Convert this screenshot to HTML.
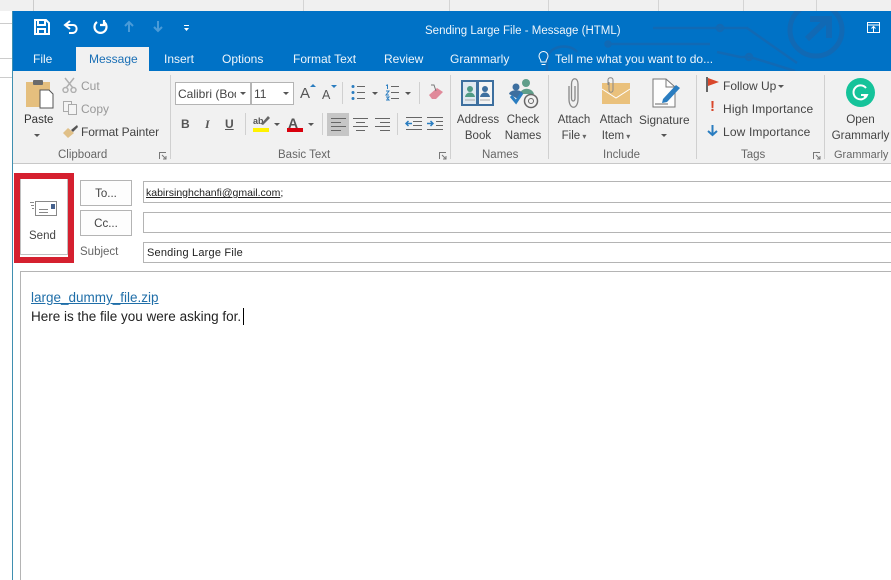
<!DOCTYPE html>
<html><head><meta charset="utf-8"><style>
html,body{margin:0;padding:0;width:891px;height:580px;overflow:hidden;background:#fff}
body{position:relative;font-family:"Liberation Sans",sans-serif;font-size:12px;color:#444}
div,span.t,svg{position:absolute}
.t{position:absolute;white-space:nowrap;line-height:14px}
.c{text-align:center}
.w{color:#eef5fb}
.g{color:#666}
.d{color:#a0a0a0}
.sep{width:1px;background:#d0d0d0}
.box{background:#fff;border:1px solid #b4b4b4;box-sizing:border-box}
.arr{width:0;height:0;border-left:3px solid transparent;border-right:3px solid transparent;border-top:3px solid #555}
</style></head><body>
<!-- background app -->
<div style="left:0;top:0;width:891px;height:11px;background:#f0f0f0"></div>
<div style="left:33px;top:0;width:1px;height:11px;background:#ccc"></div>
<div style="left:303px;top:0;width:1px;height:11px;background:#d4d4d4"></div>
<div style="left:449px;top:0;width:1px;height:11px;background:#d4d4d4"></div>
<div style="left:548px;top:0;width:1px;height:11px;background:#d4d4d4"></div>
<div style="left:658px;top:0;width:1px;height:11px;background:#d4d4d4"></div>
<div style="left:743px;top:0;width:1px;height:11px;background:#d4d4d4"></div>
<div style="left:816px;top:0;width:1px;height:11px;background:#d4d4d4"></div>
<div style="left:0;top:23px;width:12px;height:1px;background:#ccc"></div>
<div style="left:0;top:58px;width:12px;height:1px;background:#ccc"></div>
<div style="left:0;top:77px;width:12px;height:1px;background:#ccc"></div>
<!-- window -->
<div style="left:12px;top:11px;width:879px;height:569px;background:#fff;border-left:1px solid #3f8fb0;box-sizing:border-box"></div>
<div style="left:13px;top:11px;width:878px;height:60px;background:#0072c6"></div>
<!-- decoration -->
<svg style="left:400px;top:11px" width="491" height="60" fill="none" stroke="#1169b4" stroke-width="2.500">
<circle cx="416" cy="19" r="26" stroke-width="5"/>
<path d="M407 28L428 8M410 8H429V27" stroke-width="6"/>
<path d="M253 17H347L397 52"/>
<circle cx="320" cy="17" r="3"/>
<path d="M207 33H310"/>
<circle cx="208" cy="33" r="2.500"/>
<path d="M317 41L340 46H350L395 60M350 46" />
<circle cx="349" cy="46" r="3"/>
<path d="M147 47C150 34 170 32 177 41M147 47V60"/>
</svg>
<!-- QAT -->
<svg style="left:34px;top:19px" width="16" height="16" fill="none" stroke="#fff" stroke-width="2"><path d="M1 1H12L15 4V15H1Z"/><path d="M4 2V6H11V2M4 15V10H11V15"/></svg>
<svg style="left:63px;top:19px" width="16" height="16" fill="none" stroke="#fff" stroke-width="2"><path d="M7 2L2 6L7 10M2 6H10C15 6 15 14 9 14H6"/></svg>
<svg style="left:92px;top:19px" width="16" height="16" fill="none" stroke="#fff" stroke-width="2.200"><path d="M5 3A6 6 0 1 0 12 3M12 1V6H8"/></svg>
<svg style="left:123px;top:20px" width="12" height="13" fill="none" stroke="#4a9bd8" stroke-width="2"><path d="M6 12V2M2 6L6 2L10 6"/></svg>
<svg style="left:152px;top:20px" width="12" height="13" fill="none" stroke="#4a9bd8" stroke-width="2"><path d="M6 1V11M2 7L6 11L10 7"/></svg>
<svg style="left:183px;top:25px" width="8" height="8" fill="#fff"><rect x="1" y="0" width="5" height="1"/><path d="M1 3H6L3.500 6Z"/></svg>
<span class="t w" style="left:425px;top:24px;font-size:11.500px">Sending Large File - Message (HTML)</span>
<svg style="left:867px;top:22px" width="13" height="11" fill="none" stroke="#fff"><rect x=".5" y=".5" width="12" height="10"/><path d="M.5 3H12.500M6.500 10V5M4.500 6.500L6.500 4.500L8.500 6.500"/></svg>
<!-- tabs -->
<div style="left:76px;top:47px;width:73px;height:24px;background:#f1f1f1"></div>
<span class="t w" style="left:33px;top:52px">File</span>
<span class="t" style="left:89px;top:52px;color:#1a6fb5">Message</span>
<span class="t w" style="left:164px;top:52px">Insert</span>
<span class="t w" style="left:222px;top:52px">Options</span>
<span class="t w" style="left:293px;top:52px">Format Text</span>
<span class="t w" style="left:384px;top:52px">Review</span>
<span class="t w" style="left:450px;top:52px">Grammarly</span>
<svg style="left:537px;top:51px" width="13" height="16" fill="none" stroke="#fff"><path d="M4 11C4 8 2 8 2 5A4.500 4.500 0 0 1 11 5C11 8 9 8 9 11ZM4.500 13.500H8.500"/></svg>
<span class="t w" style="left:555px;top:52px">Tell me what you want to do...</span>
<!-- ribbon -->
<div style="left:13px;top:71px;width:878px;height:92px;background:#f1f1f1;border-bottom:1px solid #c8c8c8"></div>
<div class="sep" style="left:170px;top:75px;height:84px"></div>
<div class="sep" style="left:450px;top:75px;height:84px"></div>
<div class="sep" style="left:548px;top:75px;height:84px"></div>
<div class="sep" style="left:696px;top:75px;height:84px"></div>
<div class="sep" style="left:824px;top:75px;height:84px"></div>
<!-- clipboard -->
<svg style="left:25px;top:78px" width="30" height="32"><rect x="1" y="4" width="24" height="25" fill="#e5bf7e"/><rect x="8" y="2" width="10" height="5" rx="1" fill="#6b6b6b"/><path d="M15 12H24L28 16V30H15Z" fill="#fff" stroke="#555"/></svg>
<span class="t" style="left:24px;top:113px;color:#333;font-size:11.500px">Paste</span>
<div class="arr" style="left:34px;top:134px"></div>
<svg style="left:62px;top:77px" width="16" height="16" fill="none" stroke="#b0b0b0" stroke-width="1.500"><path d="M3 1L11 11M12 1L4 11"/><circle cx="3.500" cy="13" r="2.500"/><circle cx="11.500" cy="13" r="2.500"/></svg>
<span class="t d" style="left:81px;top:79px;color:#999">Cut</span>
<svg style="left:62px;top:100px" width="16" height="16" fill="#f4f4f4" stroke="#aaa"><rect x="1.500" y="1.500" width="8" height="10"/><rect x="6.500" y="4.500" width="8" height="10"/></svg>
<span class="t d" style="left:81px;top:102px;color:#999">Copy</span>
<svg style="left:62px;top:124px" width="17" height="15"><path d="M1 9L6 4L12 9L6 14Z" fill="#e0c088"/><path d="M9 6L15 1L16 3L11 8Z" fill="#555"/></svg>
<span class="t" style="left:81px;top:125px;letter-spacing:-.1px">Format Painter</span>
<span class="t g" style="left:58px;top:148px;font-size:11.500px">Clipboard</span>
<svg style="left:159px;top:152px" width="8" height="8" fill="none" stroke="#777"><path d="M.5 7V.5H7M3 3L7 7M7 4V7H4"/></svg>
<!-- font -->
<div class="box" style="left:175px;top:82px;width:76px;height:23px"></div>
<div class="box" style="left:251px;top:82px;width:43px;height:23px"></div>
<span class="t" style="left:178px;top:87px;width:58px;overflow:hidden">Calibri (Body)</span>
<div class="arr" style="left:240px;top:92px"></div>
<span class="t" style="left:254px;top:87px">11</span>
<div class="arr" style="left:283px;top:92px"></div>
<span class="t" style="left:300px;top:87px;font-size:15px;color:#555">A</span>
<span class="t" style="left:322px;top:88px;font-size:12.500px;color:#555">A</span>
<div style="left:310px;top:84px;width:0;height:0;border:3px solid transparent;border-bottom:3px solid #2a7dc0;border-top:0"></div>
<div style="left:331px;top:85px;width:0;height:0;border:3px solid transparent;border-top:3px solid #2a7dc0;border-bottom:0"></div>
<div class="sep" style="left:342px;top:82px;height:22px"></div>
<svg style="left:350px;top:84px" width="16" height="18" fill="none" stroke="#666"><path d="M7 2.500H15M7 8.500H15M7 14.500H15"/><g fill="#2a7dc0" stroke="none"><circle cx="3" cy="2.500" r="1.500"/><circle cx="3" cy="8.500" r="1.500"/><circle cx="3" cy="14.500" r="1.500"/></g></svg>
<div class="arr" style="left:372px;top:92px"></div>
<svg style="left:384px;top:84px" width="16" height="18" fill="none" stroke="#666"><path d="M7 2.500H15M7 8.500H15M7 14.500H15"/><g stroke="#2a7dc0"><path d="M2 1.500L3.500 1V5M2 7H5L2 11H5M2 13H5L3.500 14.500L5 16H2"/></g></svg>
<div class="arr" style="left:405px;top:92px"></div>
<div class="sep" style="left:419px;top:82px;height:22px"></div>
<svg style="left:428px;top:84px" width="16" height="17"><path d="M1 11L9 4L15 8L8 15H4Z" fill="#e08a9a"/><path d="M3 1H6L8 7" fill="none" stroke="#777"/></svg>
<span class="t" style="left:181px;top:117px;font-weight:bold;color:#555">B</span>
<span class="t" style="left:205px;top:117px;font-style:italic;font-weight:bold;color:#555;font-family:'Liberation Serif',serif">I</span>
<span class="t" style="left:225px;top:117px;font-weight:bold;color:#555;text-decoration:underline">U</span>
<div class="sep" style="left:245px;top:113px;height:22px"></div>
<span class="t" style="left:253px;top:114px;font-size:9px;font-weight:bold;color:#555">ab</span>
<svg style="left:260px;top:115px" width="10" height="10"><path d="M1 9L8 1L10 3L3 10Z" fill="#666"/></svg>
<div style="left:253px;top:128px;width:16px;height:4px;background:#fff200"></div>
<div class="arr" style="left:274px;top:123px"></div>
<span class="t" style="left:288px;top:116px;font-size:14px;font-weight:bold;color:#555">A</span>
<div style="left:287px;top:128px;width:16px;height:4px;background:#d9000d"></div>
<div class="arr" style="left:308px;top:123px"></div>
<div class="sep" style="left:322px;top:113px;height:22px"></div>
<div style="left:327px;top:113px;width:22px;height:23px;background:#c6c6c6"></div>
<svg style="left:331px;top:118px" width="15" height="13" stroke="#666" fill="none"><path d="M0 .5H15M0 4.500H10M0 8.500H15M0 12.500H10"/></svg>
<svg style="left:353px;top:118px" width="15" height="13" stroke="#666" fill="none"><path d="M0 .5H15M3 4.500H12M0 8.500H15M3 12.500H12"/></svg>
<svg style="left:375px;top:118px" width="15" height="13" stroke="#666" fill="none"><path d="M0 .5H15M5 4.500H15M0 8.500H15M5 12.500H15"/></svg>
<div class="sep" style="left:397px;top:113px;height:22px"></div>
<svg style="left:404px;top:117px" width="18" height="15" fill="none" stroke="#666"><path d="M2 .5H18M9 4.500H18M9 8.500H18M2 12.500H18"/><path d="M8 6.500H2M4.500 4L2 6.500L4.500 9" stroke="#2a7dc0" stroke-width="1.500"/></svg>
<svg style="left:427px;top:117px" width="18" height="15" fill="none" stroke="#666"><path d="M0 .5H16M9 4.500H16M9 8.500H16M0 12.500H16"/><path d="M0 6.500H6M3.500 4L6 6.500L3.500 9" stroke="#2a7dc0" stroke-width="1.500"/></svg>
<span class="t g" style="left:278px;top:148px;font-size:11.500px">Basic Text</span>
<svg style="left:439px;top:152px" width="8" height="8" fill="none" stroke="#777"><path d="M.5 7V.5H7M3 3L7 7M7 4V7H4"/></svg>
<!-- names -->
<svg style="left:461px;top:79px" width="34" height="28"><path d="M1 2H16V26H1Z" fill="#dfe8f0" stroke="#3d6f9f" stroke-width="2"/><path d="M17 2H32V26H17Z" fill="#f4f4f4" stroke="#3d6f9f" stroke-width="2"/><circle cx="9" cy="10" r="3" fill="#4f9a85"/><path d="M4 18C5 12 13 12 14 18Z" fill="#4f9a85"/><circle cx="24" cy="10" r="3" fill="#3d6f9f"/><path d="M19 18C20 12 28 12 29 18Z" fill="#3d6f9f"/><path d="M4 21H14M19 21H29" stroke="#aaa"/></svg>
<div class="t c" style="left:452px;top:112px;width:52px;line-height:16px;color:#444;font-size:11.500px">Address<br>Book</div>
<svg style="left:508px;top:78px" width="32" height="32" fill="none"><circle cx="8" cy="9" r="3.500" fill="#3d6f9f"/><circle cx="18" cy="5" r="4" fill="#5f9e8a"/><path d="M12 16C13 9 24 9 26 16Z" fill="#5f9e8a"/><path d="M1 16C2 11 14 11 15 16L10 21Z" fill="#3d6f9f"/><path d="M3 18L8 24L14 15" stroke="#2a7dc0" stroke-width="3"/><circle cx="23" cy="23" r="6.500" stroke="#666" stroke-width="1.500"/><circle cx="23" cy="23" r="2.500" stroke="#666"/></svg>
<div class="t c" style="left:500px;top:112px;width:46px;line-height:16px;font-size:11.500px">Check<br>Names</div>
<span class="t g" style="left:482px;top:148px;font-size:11.500px">Names</span>
<!-- include -->
<svg style="left:566px;top:78px" width="14" height="30" fill="none" stroke="#888" stroke-width="1.300"><path d="M3 8V21C3 32 12 32 12 21V6C12-1 5.500-1 5.500 6V20C5.500 24 9 24 9 20V8"/></svg>
<div class="t c" style="left:552px;top:112px;width:44px;line-height:16px;font-size:11.500px">Attach<br>File<span style="font-size:8px;color:#666"> ▾</span></div>
<svg style="left:601px;top:77px" width="30" height="30"><rect x="1" y="6" width="28" height="21" fill="#eac17c"/><path d="M1 12L15 21L29 12" fill="none" stroke="#fff"/><path d="M7 8V3C7 0 12 0 12 3V13C12 16 8 16 8 13V5" fill="none" stroke="#888"/></svg>
<div class="t c" style="left:594px;top:112px;width:44px;line-height:16px;font-size:11.500px">Attach<br>Item<span style="font-size:8px;color:#666"> ▾</span></div>
<svg style="left:652px;top:78px" width="30" height="30" fill="none"><path d="M1 1H14L23 9V29H1Z" fill="#fdfdfd" stroke="#777"/><path d="M14 1V9H23" stroke="#777"/><path d="M11 21L24 7L28 10L15 24L10 25Z" fill="#2a7dc0"/><path d="M3 26H16" stroke="#666"/></svg>
<span class="t" style="left:639px;top:113px;font-size:11.800px">Signature</span>
<div class="arr" style="left:661px;top:134px"></div>
<span class="t g" style="left:603px;top:148px;font-size:11.500px">Include</span>
<!-- tags -->
<svg style="left:706px;top:77px" width="14" height="16"><rect x="0" y="0" width="2" height="15" fill="#666"/><path d="M2 1L13 5L2 9Z" fill="#d9472b"/></svg>
<span class="t" style="left:723px;top:79px">Follow Up</span><div class="arr" style="left:778px;top:85px"></div>
<span class="t" style="left:710px;top:100px;font-weight:bold;font-size:15px;color:#d9472b">!</span>
<span class="t" style="left:723px;top:102px;letter-spacing:.15px">High Importance</span>
<svg style="left:707px;top:124px" width="11" height="14" fill="none" stroke="#2a7dc0" stroke-width="2"><path d="M5.500 1V11M1 7L5.500 11L10 7"/></svg>
<span class="t" style="left:723px;top:125px;letter-spacing:.15px">Low Importance</span>
<span class="t g" style="left:741px;top:148px;font-size:11.500px">Tags</span>
<svg style="left:813px;top:152px" width="8" height="8" fill="none" stroke="#777"><path d="M.5 7V.5H7M3 3L7 7M7 4V7H4"/></svg>
<!-- grammarly -->
<div style="left:846px;top:78px;width:29px;height:29px;border-radius:50%;background:#15c39a"></div>
<svg style="left:851px;top:83px" width="19" height="19" fill="none" stroke="#fff" stroke-width="2"><path d="M15 5A7 7 0 1 0 16 12H10M13 12L15 15"/></svg>
<div class="t c" style="left:828px;top:112px;width:65px;line-height:16px;font-size:11.700px">Open<br>Grammarly</div>
<span class="t g" style="left:834px;top:148px;font-size:11px">Grammarly</span>
<!-- send -->
<div style="left:14px;top:173px;width:60px;height:90px;border:6px solid #d5202f;box-sizing:border-box;background:#fff"></div>
<div style="left:20px;top:179px;width:48px;height:76px;border:1px solid #c0c0c0;border-top:0;box-sizing:border-box"></div>
<svg style="left:29px;top:201px" width="29" height="16" fill="none" stroke="#888"><rect x="6.500" y=".5" width="21" height="14" fill="#fff"/><rect x="22" y="3" width="4" height="5" fill="#44608c" stroke="none"/><path d="M10 8.500H19M10 11.500H19M1 1.500H5M2 4.500H5M3 7.500H5"/></svg>
<span class="t" style="left:29px;top:229px;font-size:11.500px">Send</span>
<!-- fields -->
<div class="box" style="left:80px;top:180px;width:52px;height:26px;background:#fdfdfd"></div>
<div class="box" style="left:80px;top:210px;width:52px;height:26px;background:#fdfdfd"></div>
<span class="t c" style="left:80px;top:187px;width:52px;font-size:11.500px">To...</span>
<span class="t c" style="left:80px;top:217px;width:52px;font-size:11.500px">Cc...</span>
<span class="t g" style="left:80px;top:245px;font-size:11.500px">Subject</span>
<div class="box" style="left:143px;top:181px;width:760px;height:22px"></div>
<div class="box" style="left:143px;top:212px;width:760px;height:21px"></div>
<div class="box" style="left:143px;top:242px;width:760px;height:21px"></div>
<span class="t" style="left:146px;top:186px;font-size:10.500px;color:#222"><span style="text-decoration:underline">kabirsinghchanfi@gmail.com</span>;</span>
<span class="t" style="left:147px;top:246px;font-size:11px;color:#222;letter-spacing:.2px">Sending Large File</span>
<!-- body -->
<div style="left:20px;top:271px;width:880px;height:320px;border:1px solid #b4b4b4;box-sizing:border-box"></div>
<span class="t" style="left:31px;top:291px;font-size:13.500px;color:#1f6ea8;text-decoration:underline">large_dummy_file.zip</span>
<span class="t" style="left:31px;top:310px;font-size:13.500px;color:#222">Here is the file you were asking for.</span>
<div style="left:243px;top:308px;width:1px;height:17px;background:#000"></div>
</body></html>
